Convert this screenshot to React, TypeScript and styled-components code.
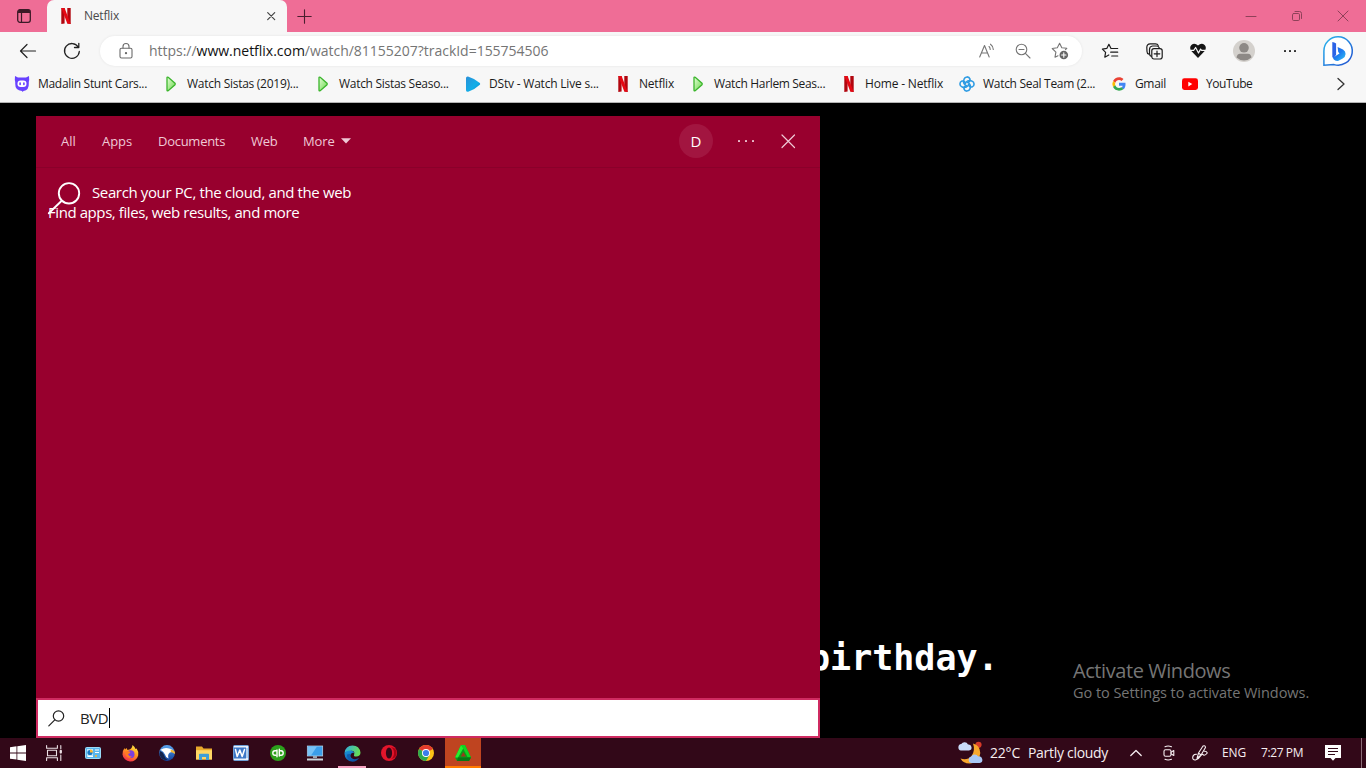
import React from "react";
import styled, { createGlobalStyle, css } from "styled-components";

const Global = createGlobalStyle`
  * { box-sizing: border-box; }
  html, body { margin: 0; padding: 0; background: #000; overflow: hidden; }
  body { font-family: "Open Sans", "Noto Sans", sans-serif; }
  svg { display: block; flex: none; overflow: visible; }
`;

const Label = styled.span<{ $w: number; $size: number; $ls?: number }>`
  display: block;
  flex: none;
  width: ${(p) => p.$w}px;
  font-size: ${(p) => p.$size}px;
  letter-spacing: ${(p) => p.$ls ?? 0}px;
  line-height: 20px;
  white-space: nowrap;
`;

const Screen = styled.div`
  display: flex;
  flex-direction: column;
  width: 1366px;
  height: 768px;
  background: #000;
  overflow: hidden;
`;

/* Browser */
const TitleStrip = styled.header`
  display: flex;
  height: 32px;
  background: #ef6d96;
`;
const TabActions = styled.div`
  display: flex;
  align-items: center;
  width: 47px;
  padding-left: 17px;
`;
const Tab = styled.div`
  display: flex;
  align-items: center;
  width: 240px;
  padding: 0 10px 0 11px;
  background: #f7f7f7;
  border-radius: 7px 7px 0 0;
  color: #4a4a4a;
`;
const TabTitle = styled.div`
  flex: 1;
  padding-left: 10px;
`;
const NewTab = styled.div`
  display: flex;
  align-items: center;
  padding-left: 10px;
`;
const WindowButtons = styled.div`
  display: flex;
  align-items: center;
  gap: 34px;
  margin-left: auto;
  padding-right: 17px;
`;
const Toolbar = styled.div`
  display: flex;
  align-items: center;
  height: 38px;
  padding-left: 19px;
  background: #f7f7f7;
`;
const NavButtons = styled.div`
  display: flex;
  flex: none;
  gap: 26px;
  width: 81px;
`;
const AddressBar = styled.div`
  display: flex;
  flex: none;
  align-items: center;
  width: 982px;
  height: 30px;
  padding: 0 13px 0 18px;
  border-radius: 15px;
  background: #fff;
  box-shadow: 0 0 3px rgba(0, 0, 0, 0.08);
`;
const Url = styled.div`
  flex: 1;
  padding-left: 15px;
  color: #757575;
  b { font-weight: 400; color: #111; }
`;
const AddressActions = styled.div`
  display: flex;
  align-items: center;
  gap: 20px;
`;
const ToolActions = styled.div`
  display: flex;
  align-items: center;
  gap: 27px;
  margin-left: 20px;
`;
const Bookmarks = styled.nav`
  display: flex;
  align-items: center;
  gap: 16px;
  height: 33px;
  padding: 0 21px 5px 14px;
  background: #f7f7f7;
  border-bottom: 1px solid #b4b4b4;
  color: #1b1b1b;
`;
const Bookmark = styled.div`
  display: flex;
  align-items: center;
  gap: 8px;
`;
const Overflow = styled.div`
  margin-left: auto;
`;

/* Page and search panel */
const Stage = styled.main`
  position: relative;
  flex: 1;
  padding: 13px 0 0 36px;
  background: #000;
`;
const Panel = styled.section`
  position: relative;
  z-index: 1;
  display: flex;
  flex-direction: column;
  width: 784px;
  height: 622px;
  background: #98002e;
  color: #fff;
`;
const PanelHeader = styled.div`
  display: flex;
  align-items: center;
  height: 52px;
  padding: 0 24px 2px 25px;
  border-bottom: 1px solid #8a002a;
  color: #efc9d6;
`;
const Filters = styled.div`
  display: flex;
  flex: 1;
  gap: 26px;
`;
const MoreFilter = styled.div`
  display: flex;
  align-items: center;
  gap: 6px;
`;
const Avatar = styled.div`
  display: flex;
  align-items: center;
  justify-content: center;
  width: 34px;
  height: 34px;
  margin-right: 25px;
  border-radius: 50%;
  background: #a21540;
  color: #fff;
`;
const PanelClose = styled.div`
  margin-left: 28px;
`;
const PanelBody = styled.div`
  flex: 1;
  padding: 14px 12px;
`;
const Hint = styled.div`
  display: flex;
  height: 20px;
  gap: 12px;
`;
const SearchField = styled.div`
  display: flex;
  align-items: center;
  height: 40px;
  padding-left: 10px;
  border: 2px solid #cf2b61;
  background: #fff;
  color: #222;
`;
const Query = styled.div`
  display: flex;
  align-items: center;
  padding-left: 15px;
`;
const Caret = styled.i`
  width: 1px;
  height: 20px;
  background: #000;
`;
const Subtitle = styled.div`
  position: absolute;
  left: 809px;
  top: 534px;
  font: 700 35px/42px "DejaVu Sans Mono", monospace;
  color: #fff;
`;
const Watermark = styled.div`
  position: absolute;
  left: 1073px;
  top: 558px;
  display: flex;
  flex-direction: column;
  gap: 2px;
  color: #757575;
`;

/* Taskbar */
const Taskbar = styled.footer`
  display: flex;
  height: 30px;
  background: #320818;
  color: #f6eef1;
`;
const SystemButtons = styled.div`
  display: flex;
  width: 75px;
`;
const Apps = styled.div`
  display: flex;
  gap: 1px;
`;
const TaskButton = styled.div<{ $state?: "open" | "alert" }>`
  display: flex;
  align-items: center;
  justify-content: center;
  width: 36px;
  height: 30px;
  ${(p) => p.$state === "open" && css`
    background: linear-gradient(#f7a1c0, #f7a1c0) 4px 28px / 28px 2px no-repeat;
  `}
  ${(p) => p.$state === "alert" && css`
    background: #bf4420;
    box-shadow: inset 0 -2px #ff7a00;
  `}
`;
const Tray = styled.div`
  display: flex;
  align-items: center;
  margin-left: auto;
  padding-right: 20px;
  border-right: 1px solid #8b6c77;
  margin-right: 4px;
`;
const TrayItem = styled.div<{ $gap: number }>`
  margin-left: ${(p) => p.$gap}px;
`;

/* Icons */
const stroke = (c: string, w = 1.2) => ({ fill: "none", stroke: c, strokeWidth: w, strokeLinecap: "round" as const, strokeLinejoin: "round" as const });

const NetflixIcon = () => (
  <svg width="16" height="16" viewBox="0 0 16 16">
    <path d="M3.300 0h3.300v15.600L3.300 16z" fill="#b1060f" />
    <path d="M9.300 0h3.400v16l-3.400-.4z" fill="#b1060f" />
    <path d="M3.300 0h3.300l6.100 16-3.400-.4z" fill="#e50914" />
  </svg>
);
const PlayIcon = () => (
  <svg width="16" height="16" viewBox="0 0 16 16">
    <defs><linearGradient id="green" x1="0" y1="0" x2="1" y2="1"><stop stopColor="#e6ffd9" /><stop offset="1" stopColor="#69d64a" /></linearGradient></defs>
    <path d="M4 1.500q.2-.8 1.200-.2L12 7.200q.6.8 0 1.500L5.200 14.700q-1 .5-1.200-.3z" fill="url(#green)" stroke="#3bb52c" strokeWidth="1.300" />
  </svg>
);
const OwlIcon = () => (
  <svg width="16" height="16" viewBox="0 0 16 16">
    <path d="M1 0l3 1.500h8L15 0l.2 4q-.6 2-.4 3.500Q15.200 14 9.500 15L8.500 16 8 15Q1 14.500 1.200 7.500 1.500 6 .8 4z" fill="#6842ff" />
    <rect x="3.500" y="4.500" width="9" height="6.500" rx="3.200" fill="#fff" />
    <rect x="5.300" y="6.300" width="1.600" height="3" rx=".8" fill="#6842ff" />
    <rect x="9.100" y="6.300" width="1.600" height="3" rx=".8" fill="#6842ff" />
  </svg>
);
const DstvIcon = () => (
  <svg width="16" height="16" viewBox="0 0 16 16">
    <defs><linearGradient id="dstv" x1="0" y1="0" x2="1" y2="1"><stop stopColor="#2b8fd8" /><stop offset=".6" stopColor="#12aee8" /><stop offset="1" stopColor="#0b86c8" /></linearGradient></defs>
    <path d="M1 2Q1 .2 3 .4 10 2.500 14.800 7q.9 1 0 1.800Q10 13.500 3.200 15.700 1.200 16 1 14.200z" fill="url(#dstv)" />
  </svg>
);
const KnotIcon = () => (
  <svg width="16" height="16" viewBox="0 0 16 16" {...stroke("#2d9be3", 1.6)}>
    {[0, 90, 180, 270].map((a) => (
      <path key={a} transform={`rotate(${a} 8 8)`} d="M6.300 9C4.600 7.500 4.300 5 5 3.200 6 .2 10 .2 11 3 11.300 5 10.200 6 8.500 6.500" />
    ))}
  </svg>
);
const GoogleIcon = () => (
  <svg width="16" height="16" viewBox="0 0 48 48">
    <path fill="#EA4335" d="M24 12c3 0 5.600 1 7.700 3l5.700-5.700C33.900 6 29.300 4 24 4 16.200 4 9.500 8.500 6.200 15l6.700 5.200C14.500 15.500 18.800 12 24 12z" />
    <path fill="#4285F4" d="M43.600 24.500c0-1.300-.1-2.600-.4-3.900H24v8.300h11c-.5 2.500-1.900 4.600-4 6l6.500 5c3.800-3.500 6.100-8.900 6.100-15.400z" />
    <path fill="#FBBC05" d="M12.900 28.200a12 12 0 0 1 0-8L6.200 15a20 20 0 0 0 0 18.200z" />
    <path fill="#34A853" d="M24 44c5.400 0 10-1.800 13.400-4.900l-6.500-5c-1.800 1.200-4.200 2-6.900 2-5.200 0-9.500-3.500-11.100-8.200l-6.700 5.200C9.500 39.700 16.200 44 24 44z" />
  </svg>
);
const YouTubeIcon = () => (
  <svg width="16" height="16" viewBox="0 0 16 16">
    <rect y="2.300" width="16" height="11.600" rx="2.400" fill="#f00" />
    <path d="M6.300 5.800v4.600l4-2.300z" fill="#fff" />
  </svg>
);

const WorkspaceIcon = () => (
  <svg width="14" height="14" viewBox="0 0 14 14">
    <path d="M1 4V2.500Q1 .7 2.800.7h8.400Q13 .7 13 2.500V4z" fill="#3b1a27" />
    <rect x=".7" y=".7" width="12.600" height="12.600" rx="2.200" {...stroke("#3b1a27", 1.3)} />
    <path d="M4.500 4v9" {...stroke("#3b1a27")} />
  </svg>
);
const SmallCross = () => <svg width="12" height="12" viewBox="0 0 12 12"><path d="M2.700 2.700l7 7m0-7l-7 7" {...stroke("#444", 1.2)} /></svg>;
const PlusIcon = () => <svg width="15" height="15" viewBox="0 0 15 15"><path d="M7.500.8v13.400M.8 7.500h13.400" {...stroke("#4a1f2f", 1.1)} /></svg>;
const MinimizeIcon = () => <svg width="12" height="12" viewBox="0 0 12 12"><path d="M1 6.500h10" {...stroke("#8f4159", 1)} /></svg>;
const RestoreIcon = () => (
  <svg width="12" height="12" viewBox="0 0 12 12" {...stroke("#8f4159", 1)}>
    <rect x="1.500" y="3.500" width="7" height="7" rx="1.200" /><path d="M4 1.500h4.500q2 0 2 2v5" />
  </svg>
);
const WinCloseIcon = () => <svg width="12" height="12" viewBox="0 0 12 12"><path d="M1 1l10 10M11 1L1 11" {...stroke("#8f4159", 1)} /></svg>;

const BackIcon = () => <svg width="18" height="18" viewBox="0 0 18 18"><path d="M1.500 9H16.500M8 2.500L1.500 9 8 15.500" {...stroke("#222", 1.2)} /></svg>;
const ReloadIcon = () => <svg width="18" height="18" viewBox="0 0 18 18"><path d="M16.300 9.500A7.400 7.400 0 1 1 15.200 5M15.800 1.300V5.500H11.500" {...stroke("#222", 1.3)} /></svg>;
const LockIcon = () => (
  <svg width="16" height="18" viewBox="0 0 16 18" {...stroke("#6b6b6b", 1.1)}>
    <rect x="2" y="6.300" width="12" height="9.700" rx="1.500" /><path d="M5 6V4.500a3 3 0 0 1 6 0V6" /><circle cx="8" cy="11.200" r=".6" fill="#6b6b6b" />
  </svg>
);
const ReadAloudIcon = () => (
  <svg width="16" height="16" viewBox="0 0 16 16" {...stroke("#767676", 1.1)}>
    <path d="M.7 14L5.500 2.500 10.200 14M2.400 10h6.200M10 3.500q1.200 1 1.200 3M11.500 1.200q2.800 2 2.800 5.300" />
  </svg>
);
const ZoomOutIcon = () => <svg width="16" height="16" viewBox="0 0 16 16" {...stroke("#767676", 1.1)}><circle cx="6.500" cy="6.500" r="5.300" /><path d="M10.400 10.400l4.600 4.600M4 6.500h5" /></svg>;
const StarAddIcon = () => (
  <svg width="18" height="18" viewBox="0 0 18 18">
    <path d="M14.500 7.600l1.300-1.300-5-.6-2.200-4.400-2.300 4.400-5.100.8 3.700 3.600-.9 5.100 3-1.500" {...stroke("#767676", 1.1)} />
    <circle cx="12.800" cy="13" r="4.300" fill="#666" /><path d="M12.800 10.800v4.400M10.600 13h4.400" {...stroke("#fff", 1.1)} />
  </svg>
);
const FavoritesIcon = () => (
  <svg width="17" height="16" viewBox="0 0 17 16" {...stroke("#1c1c1c", 1.2)}>
    <path d="M9 5.500L6.900 1.300 4.800 5.400.4 6.100l3.200 3.200-.8 4.900 4-2.200M9 5.500h6.700M8.700 9.200h7M9.700 13h6" />
  </svg>
);
const CollectionsIcon = () => (
  <svg width="17" height="17" viewBox="0 0 17 17" {...stroke("#1c1c1c", 1.2)}>
    <path d="M3 11.200Q1 10.800 1 8.500L.8 4.500Q.8 1 4.200.8H9.500q2 0 2.700 1.700" /><path d="M5.500 13.500Q3.500 13 3.500 10.500V6.500q0-3.200 3-3.500h4q2 0 2.700 1.800" />
    <rect x="5.800" y="5.600" width="10.400" height="10.400" rx="2.200" fill="#f7f7f7" /><path d="M11 8v5.600M8.200 10.800h5.600" />
  </svg>
);
const HeartIcon = () => (
  <svg width="16" height="16" viewBox="0 0 16 16">
    <path d="M8 15L1.300 8Q-1 4.500 1.400 1.900 4.700-.7 8 2.600 11.300-.7 14.600 1.900 17 4.500 14.700 8z" fill="#151515" />
    <path d="M0 7.300h3.800l1.800-2.800 2.900 5.500 2.100-3.900 1 1.200H16" {...stroke("#f7f7f7", 1.2)} />
  </svg>
);
const ProfileIcon = () => (
  <svg width="22" height="22" viewBox="0 0 22 22">
    <circle cx="11" cy="11" r="11" fill="#d4d1cd" /><circle cx="11" cy="7.800" r="4.800" fill="#8d8986" />
    <path d="M3.500 17.500Q4 13.700 7 13.700h8q3 0 3.500 3.800A11 11 0 0 1 3.500 17.500z" fill="#8d8986" />
  </svg>
);
const DotsIcon = ({ color, gap }: { color: string; gap: number }) => (
  <svg width="14" height="4" viewBox="0 0 14 4" fill={color}>
    {[-gap, 0, gap].map((x) => <rect key={x} x={7 + x} y="1" width="2" height="2" rx=".4" />)}
  </svg>
);
const BingIcon = () => (
  <svg width="30" height="30" viewBox="0 0 30 30">
    <defs>
      <linearGradient id="ring" x1="0" y1="0" x2="1" y2="1"><stop stopColor="#27b7ee" /><stop offset="1" stopColor="#2350cf" /></linearGradient>
      <linearGradient id="bing" x1="0" y1="0" x2="1" y2="1"><stop stopColor="#2b60e8" /><stop offset=".5" stopColor="#1d7df0" /><stop offset="1" stopColor="#33c6f2" /></linearGradient>
    </defs>
    <path d="M15 .8a14.200 14.200 0 1 1-4 27.800L.9 29.300V15A14.100 14.100 0 0 1 15 .8z" fill="#fff" stroke="url(#ring)" strokeWidth="1.500" />
    <path d="M9.300 6q2 .2 3.800 1.500v11.200l-2.600 3.600q-1.200-.6-1.200-2z" fill="#2b62e6" />
    <path d="M14.600 10.900l5.400 2.600q2.700 1.500 2.600 4.500-.2 3-2.900 4.600l-4.200 2.200q-3.300.6-4.900-1.600-.7-1-.4-1.800l6.300-3.900-1.300-1.500z" fill="url(#bing)" />
  </svg>
);
const ChevronRight = () => <svg width="8" height="14" viewBox="0 0 8 14"><path d="M1 1.500l6 5.500-6 5.500" {...stroke("#333", 1.3)} /></svg>;

const CaretDown = () => <svg width="10" height="6" viewBox="0 0 10 6"><path d="M0 .3h10L5 5.500z" fill="#efc9d6" /></svg>;
const CrossIcon = () => <svg width="16" height="16" viewBox="0 0 16 16"><path d="M2 2l12.500 12.500m0-12.500L2 14.500" {...stroke("#efc9d6", 1.2)} /></svg>;
const BigSearch = () => <svg width="32" height="34" viewBox="0 0 32 34"><circle cx="21" cy="11.300" r="10.200" {...stroke("#fff", 1.9)} /><path d="M13.700 18.700L.8 31.300" {...stroke("#fff", 1.9)} /></svg>;
const SmallSearch = () => <svg width="17" height="17" viewBox="0 0 17 17"><circle cx="10.500" cy="6" r="5.200" {...stroke("#222", 1.2)} /><path d="M6.800 9.800L.8 15.800" {...stroke("#222", 1.2)} /></svg>;

const WindowsIcon = () => <svg width="16" height="16" viewBox="0 0 16 16" fill="#fff"><path d="M0 2.300L6.500 1.300v6.200H0zM7.300 1.200L16 0v7.500H7.300zM0 8.400h6.500v6.200L0 13.700zM7.300 8.400H16V16l-8.700-1.300z" /></svg>;
const TaskViewIcon = () => (
  <svg width="17" height="16" viewBox="0 0 17 16" {...stroke("#eadfe3", 1.1)}>
    <path d="M.6.500v2.700h10.800V.5M.6 15.500v-2.700h10.800v2.700" /><rect x="1.500" y="5.300" width="9" height="5.400" /><path d="M14.800.5v3.200M14.800 10v5.500" /><path d="M14.800 6v1.500" strokeWidth="2.300" />
  </svg>
);
const ControlPanelIcon = () => (
  <svg width="16" height="14" viewBox="0 0 16 14">
    <rect x=".5" y="1.500" width="15" height="11" rx="1" fill="#59b6ec" stroke="#9adcf8" /><rect x="2" y="3" width="6" height="8" fill="#bde7fb" />
    <circle cx="5" cy="6.500" r="2.600" fill="#1778c4" /><path d="M5 6.500V3.600A2.800 2.800 0 0 1 7.900 6.500z" fill="#ffb52e" /><path d="M10 4h4M10 6.500h4M3 10.500h5" stroke="#fff" /><path d="M10 10h2" stroke="#ffb52e" strokeWidth="1.500" />
  </svg>
);
const FirefoxIcon = () => (
  <svg width="17" height="17" viewBox="0 0 17 17">
    <defs><linearGradient id="fox" x1=".8" y1="0" x2=".3" y2="1"><stop stopColor="#fff04a" /><stop offset=".45" stopColor="#ff9c1f" /><stop offset="1" stopColor="#f5264f" /></linearGradient></defs>
    <path d="M10.500 0Q13 2 13.500 4l1.200-.5Q17 7 16.200 10.500A8 8 0 0 1 .5 9.500Q.2 6 2.500 3L3 4.500 4.500 3 5.500 5Q9 4.500 9.500 3 10.500 1.500 10.500 0z" fill="url(#fox)" />
    <circle cx="8.600" cy="9.200" r="3.900" fill="#7a3fe0" /><path d="M3.500 6.500Q6 5 8.500 7.200 7.500 8.800 6 9 6.800 11.800 10 11.500 7.500 14 5 12 2.500 9.500 3.500 6.500z" fill="#ff7a22" />
  </svg>
);
const EagleIcon = () => (
  <svg width="16" height="16" viewBox="0 0 16 16">
    <defs><linearGradient id="sky" x1="0" y1="0" x2="0" y2="1"><stop stopColor="#5ba4ee" /><stop offset="1" stopColor="#0e3f9c" /></linearGradient></defs>
    <circle cx="8" cy="8" r="7.900" fill="url(#sky)" />
    <path d="M1.500 4.800Q6 1.800 11 3.800L14.500 5.300 13 7Q10.500 7 9.500 9 8.500 11.500 9.500 13.500 6.500 12.500 6 9.500 5 7 1.500 4.800z" fill="#fff" />
    <path d="M11.500 4.500q3 .3 4.300 2.200.3 1 0 2.300Q14 7.300 11.800 7z" fill="#f2b632" /><path d="M1 6q3.300 1 4 4 .6 3.300 3.500 5Q3.500 15.500 1.300 11.500 0 8.500 1 6z" fill="#12234d" />
  </svg>
);
const FolderIcon = () => (
  <svg width="16" height="14" viewBox="0 0 16 14"><path d="M0 .5h6l1.500 2H16v11H0z" fill="#e9a92c" /><path d="M0 4.200h16v9.300H0z" fill="#ffd765" /><path d="M3 14V8.500q0-.8.800-.8h8.400q.8 0 .8.800V14h-3v-3H6v3z" fill="#3f9fd8" /></svg>
);
const WordIcon = () => (
  <svg width="16" height="16" viewBox="0 0 16 16"><rect x=".5" y=".5" width="15" height="15" rx="1" fill="#e8f1fb" stroke="#6e9fd6" /><rect x="1" y="2.500" width="12" height="11" fill="#3d78c8" /><path d="M2.500 4.500l1.700 7L6.800 5l2.400 6.500 2.300-7" {...stroke("#fff", 1.5)} /><path d="M14 3v10" stroke="#7fabdd" /></svg>
);
const QuickBooksIcon = () => (
  <svg width="16" height="16" viewBox="0 0 16 16"><circle cx="8" cy="8" r="8" fill="#2ca01c" /><path d="M7 11.800V4.900M6.800 5.800H5a2.200 2.200 0 0 0 0 4.400h.6M9.300 4.200v6.900M9.400 10.200H11a2.200 2.200 0 0 0 0-4.400h-.6" {...stroke("#fff", 1.4)} /></svg>
);
const ComputerIcon = () => (
  <svg width="16" height="16" viewBox="0 0 16 16"><rect x=".3" y="1" width="15.400" height="10" fill="#3a9eea" stroke="#bcd9ee" strokeWidth=".7" /><path d="M1 1.500h9L4 10.500H1z" fill="#77c2f6" /><path d="M6 11h4v2H6z" fill="#9aa8b4" /><path d="M0 13.500h16v2H0z" fill="#c9d3db" /></svg>
);
const EdgeIcon = () => (
  <svg width="17" height="17" viewBox="0 0 17 17">
    <defs><linearGradient id="crest" x1="0" y1="0" x2="1" y2=".3"><stop stopColor="#2fa9e6" /><stop offset="1" stopColor="#66dc58" /></linearGradient><linearGradient id="wave" x1="0" y1="0" x2=".6" y2="1"><stop stopColor="#1b9de2" /><stop offset="1" stopColor="#0d4fa0" /></linearGradient></defs>
    <path d="M.5 8Q1.500.5 8.500.5t8 7.200q-.3 3.800-4.300 3.800-3.200 0-2-2.300Q11 6 7.500 5.800 3 6 .5 8z" fill="url(#crest)" />
    <path d="M.4 8.500Q2 5.500 6 5.500q3.500 0 4.300 2.500-1.500-.8-3 .5-2 2.500.5 4.800 3 2 7.400-.2Q12.500 16.800 8.500 16.700 1 16.200.4 8.500z" fill="url(#wave)" />
    <path d="M6.300 9Q4.500 12.500 8.500 15.800 2.500 14.500 3 9.500z" fill="#0f5cae" />
  </svg>
);
const OperaIcon = () => <svg width="16" height="16" viewBox="0 0 16 16"><circle cx="8" cy="8" r="8" fill="#e3152b" /><path d="M10 2Q13.500 3 14.400 4q2.200 4 0 8-1.400 1.500-4.400 2 3-2 3-6t-3-6z" fill="#a70014" /><ellipse cx="8" cy="8" rx="3.100" ry="5.500" fill="#320818" /></svg>;
const ChromeIcon = () => (
  <svg width="16" height="16" viewBox="0 0 16 16">
    <circle cx="8" cy="8" r="8" fill="#fbc116" /><path d="M8 8L1.100 4A8 8 0 0 1 14.900 4z" fill="#e33b2e" /><path d="M8 8L1.100 4A8 8 0 0 0 8 16l3.500-6z" fill="#2da94f" />
    <circle cx="8" cy="8" r="4" fill="#fff" /><circle cx="8" cy="8" r="3.100" fill="#3b7ded" />
  </svg>
);
const TriangleIcon = () => (
  <svg width="16" height="16" viewBox="0 0 16 16"><path d="M6 0h4l6 12.500-2 3.500H2L0 12.500z" fill="#0b9c1c" /><path d="M6 0l2.500 3L3 12.500H0z" fill="#27ef2d" /><path d="M6 0h4l6 12.500-3.500-.5L8.500 4z" fill="#12d421" /><path d="M3 12.500h13L14 16H2z" fill="#087713" /><path d="M8.300 7l2.700 4.500H5.800z" fill="#9b3a1b" /></svg>
);
const WeatherIcon = () => (
  <svg width="26" height="24" viewBox="0 0 26 24">
    <circle cx="20.500" cy="3.800" r="3.100" fill="#d63a28" />
    <path d="M15 2.500Q22 4 22.300 12 21.500 21.500 12 22.500 5 22.500 2.500 17.500 9 20 13.500 15 17.500 9.500 15 2.500z" fill="#f8a72c" />
    <path d="M3 9.500a3.300 3.300 0 0 1 .2-6.500A4 4 0 0 1 10 3.500a3 3 0 0 1 1 6z" fill="#c9dcf8" />
    <path d="M13 22a3.300 3.300 0 0 1 .2-6.400 4 4 0 0 1 7-.2 3.200 3.200 0 0 1 1.500 6.600z" fill="#a9c8f5" />
  </svg>
);
const ChevronUp = () => <svg width="12" height="8" viewBox="0 0 12 8"><path d="M.8 6.500L6 1.500l5.200 5" {...stroke("#f6eef1", 1.3)} /></svg>;
const MeetIcon = () => <svg width="12" height="16" viewBox="0 0 12 16" {...stroke("#f6eef1", 1.1)}><rect x="1" y="4.700" width="7" height="6.600" rx="1.500" /><path d="M8 7.200l2.800-1.700v5L8 8.800M2 1.700Q5 .2 8.500 1.700M2 14.300Q5 15.800 8.500 14.300" /></svg>;
const PenIcon = () => <svg width="16" height="16" viewBox="0 0 16 16" {...stroke("#f6eef1", 1.1)}><path d="M5 13.500L6.500 8 11 1Q13.300 0 13.500 2.500L9 10zM6.500 8L9 10M4.500 9.300Q1 9 .7 12.300.5 15.300 3.500 15 6.500 14.500 8.500 11 10.300 8.300 11.500 10 13 11 15.300 8 14.500 6 12.300 6.300" /></svg>;
const NoticeIcon = () => <svg width="16" height="16" viewBox="0 0 16 16"><path d="M0 0h16v13h-5.500L8 15.800 5.500 13H0z" fill="#fff" /><path d="M3 3.500h10M3 6.500h10M3 9.500h7" stroke="#320818" strokeWidth="1.100" /></svg>;

const bookmarks: { icon: React.FC; text: string; w: number; ls: number }[] = [
  { icon: OwlIcon, text: "Madalin Stunt Cars...", w: 109, ls: -0.3 },
  { icon: PlayIcon, text: "Watch Sistas (2019)...", w: 112, ls: -0.27 },
  { icon: PlayIcon, text: "Watch Sistas Seaso...", w: 110, ls: -0.29 },
  { icon: DstvIcon, text: "DStv - Watch Live s...", w: 110, ls: -0.2 },
  { icon: NetflixIcon, text: "Netflix", w: 35, ls: -0.2 },
  { icon: PlayIcon, text: "Watch Harlem Seas...", w: 111, ls: -0.33 },
  { icon: NetflixIcon, text: "Home - Netflix", w: 78, ls: -0.17 },
  { icon: KnotIcon, text: "Watch Seal Team (2...", w: 112, ls: -0.3 },
  { icon: GoogleIcon, text: "Gmail", w: 31, ls: -0.35 },
  { icon: YouTubeIcon, text: "YouTube", w: 46, ls: -0.42 },
];

const apps: { icon: React.FC; state?: "open" | "alert" }[] = [
  { icon: ControlPanelIcon }, { icon: FirefoxIcon }, { icon: EagleIcon }, { icon: FolderIcon }, { icon: WordIcon },
  { icon: QuickBooksIcon }, { icon: ComputerIcon }, { icon: EdgeIcon, state: "open" }, { icon: OperaIcon },
  { icon: ChromeIcon }, { icon: TriangleIcon, state: "alert" },
];

export default function App() {
  return (
    <Screen>
      <Global />
      <TitleStrip>
        <TabActions><WorkspaceIcon /></TabActions>
        <Tab>
          <NetflixIcon />
          <TabTitle><Label $w={35} $size={12} $ls={-0.2}>Netflix</Label></TabTitle>
          <SmallCross />
        </Tab>
        <NewTab><PlusIcon /></NewTab>
        <WindowButtons><MinimizeIcon /><RestoreIcon /><WinCloseIcon /></WindowButtons>
      </TitleStrip>
      <Toolbar>
        <NavButtons><BackIcon /><ReloadIcon /></NavButtons>
        <AddressBar>
          <LockIcon />
          <Url><Label $w={399} $size={14} $ls={-0.02}>https://<b>www.netflix.com</b>/watch/81155207?trackId=155754506</Label></Url>
          <AddressActions><ReadAloudIcon /><ZoomOutIcon /><StarAddIcon /></AddressActions>
        </AddressBar>
        <ToolActions>
          <FavoritesIcon /><CollectionsIcon /><HeartIcon /><ProfileIcon /><DotsIcon color="#222" gap={5} /><BingIcon />
        </ToolActions>
      </Toolbar>
      <Bookmarks>
        {bookmarks.map(({ icon: Icon, text, w, ls }) => (
          <Bookmark key={text}><Icon /><Label $w={w} $size={12} $ls={ls}>{text}</Label></Bookmark>
        ))}
        <Overflow><ChevronRight /></Overflow>
      </Bookmarks>
      <Stage>
        <Subtitle>birthday.</Subtitle>
        <Watermark>
          <Label $w={157} $size={20} $ls={-0.43}>Activate Windows</Label>
          <Label $w={236} $size={14.5} $ls={-0.04}>Go to Settings to activate Windows.</Label>
        </Watermark>
        <Panel>
          <PanelHeader>
            <Filters>
              <Label $w={15} $size={13}>All</Label>
              <Label $w={30} $size={13} $ls={-0.08}>Apps</Label>
              <Label $w={67} $size={13} $ls={-0.27}>Documents</Label>
              <Label $w={26} $size={13} $ls={-0.3}>Web</Label>
              <MoreFilter><Label $w={32} $size={13} $ls={-0.1}>More</Label><CaretDown /></MoreFilter>
            </Filters>
            <Avatar><Label $w={11} $size={15}>D</Label></Avatar>
            <DotsIcon color="#efc9d6" gap={7} />
            <PanelClose><CrossIcon /></PanelClose>
          </PanelHeader>
          <PanelBody>
            <Hint><BigSearch /><Label $w={259} $size={15} $ls={-0.37}>Search your PC, the cloud, and the web</Label></Hint>
            <Label $w={251} $size={15} $ls={-0.42}>Find apps, files, web results, and more</Label>
          </PanelBody>
          <SearchField>
            <SmallSearch />
            <Query><Label $w={29} $size={15} $ls={-0.4}>BVD</Label><Caret /></Query>
          </SearchField>
        </Panel>
      </Stage>
      <Taskbar>
        <SystemButtons>
          <TaskButton><WindowsIcon /></TaskButton>
          <TaskButton><TaskViewIcon /></TaskButton>
        </SystemButtons>
        <Apps>
          {apps.map(({ icon: Icon, state }, i) => <TaskButton key={i} $state={state}><Icon /></TaskButton>)}
        </Apps>
        <Tray>
          <WeatherIcon />
          <TrayItem $gap={6}><Label $w={30} $size={14} $ls={-0.2}>22°C</Label></TrayItem>
          <TrayItem $gap={8}><Label $w={80} $size={14} $ls={-0.3}>Partly cloudy</Label></TrayItem>
          <TrayItem $gap={22}><ChevronUp /></TrayItem>
          <TrayItem $gap={21}><MeetIcon /></TrayItem>
          <TrayItem $gap={17}><PenIcon /></TrayItem>
          <TrayItem $gap={14}><Label $w={24} $size={12} $ls={-0.15}>ENG</Label></TrayItem>
          <TrayItem $gap={15}><Label $w={42} $size={12} $ls={-0.4}>7:27 PM</Label></TrayItem>
          <TrayItem $gap={22}><NoticeIcon /></TrayItem>
        </Tray>
      </Taskbar>
    </Screen>
  );
}
